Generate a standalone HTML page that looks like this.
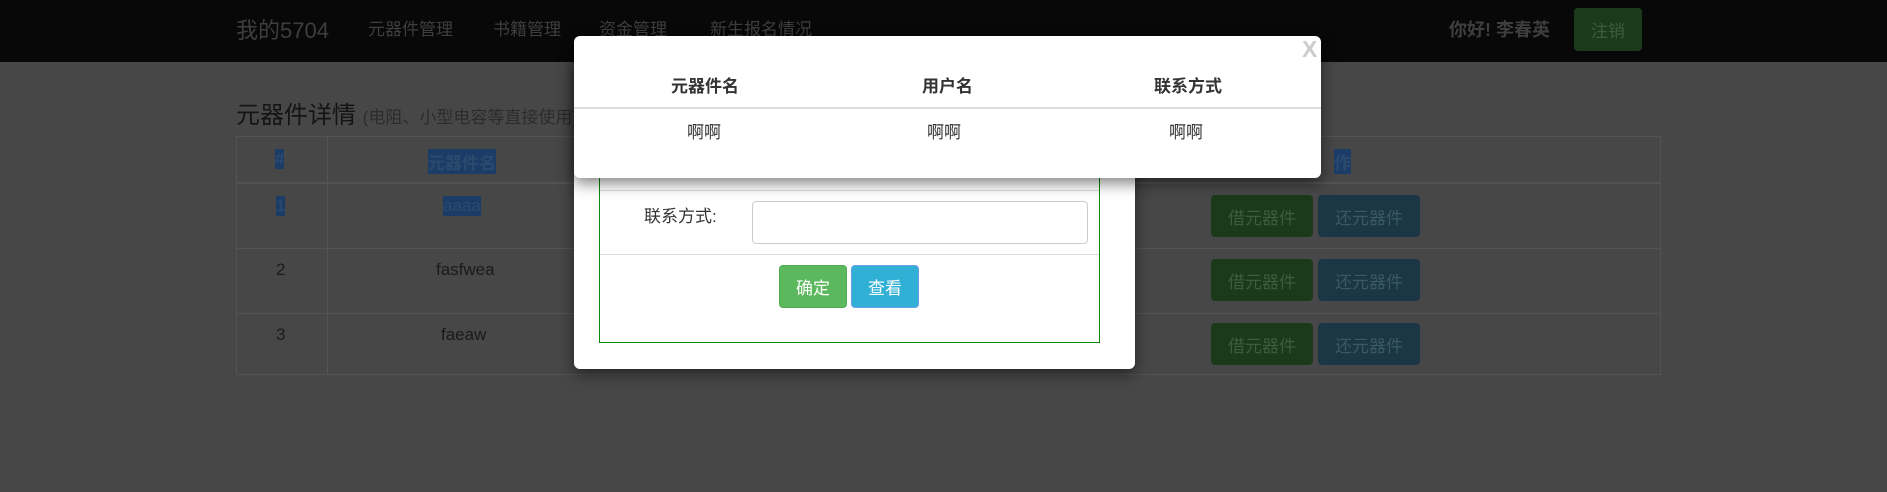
<!DOCTYPE html>
<html><head><meta charset="utf-8"><style>
*{box-sizing:border-box;margin:0;padding:0}
body{width:1887px;height:492px;background:#474747;font-family:"Liberation Sans","Noto Sans CJK SC",sans-serif;position:relative;overflow:hidden;color:#1a1a1a}
.a{position:absolute;white-space:nowrap}
.nav{position:absolute;left:0;top:0;width:1887px;height:62px;background:#080808}
.btn{position:absolute;border-radius:4px;display:flex;align-items:center;justify-content:center;font-size:17px}
.modal{position:absolute;background:#fff;border-radius:6px;box-shadow:0 5px 15px rgba(0,0,0,.5)}
</style></head><body>
<div class="nav"></div>
<div class="a" style="left:236px;top:13px;font-size:22px;color:#3e3e3e">我的5704</div>
<div class="a" style="left:368px;top:15px;font-size:17px;color:#3e3e3e">元器件管理</div>
<div class="a" style="left:493px;top:15px;font-size:17px;color:#3e3e3e">书籍管理</div>
<div class="a" style="left:599px;top:15px;font-size:17px;color:#3e3e3e">资金管理</div>
<div class="a" style="left:710px;top:15px;font-size:17px;color:#3e3e3e">新生报名情况</div>
<div class="a" style="left:1449px;top:16px;font-size:18px;font-weight:bold;color:#3e3e3e">你好! 李春英</div>
<div class="btn" style="left:1574px;top:8px;width:68px;height:43px;background:#1b3a1b;color:#3c5c3c">注销</div>

<div class="a" style="left:236px;top:95px;font-size:24px;color:#141414">元器件详情 <span style="font-size:17px;color:#2c2c2c">(电阻、小型电容等直接使用)</span></div>

<div class="a" style="left:236px;top:136px;width:1425px;height:239px;border:1px solid #535353"></div>
<div class="a" style="left:236px;top:182px;width:1425px;height:2px;background:#535353"></div>
<div class="a" style="left:236px;top:248px;width:1425px;height:1px;background:#535353"></div>
<div class="a" style="left:236px;top:313px;width:1425px;height:1px;background:#535353"></div>
<div class="a" style="left:327px;top:136px;width:1px;height:239px;background:#535353"></div>
<div class="a" style="left:275px;top:149px;font-size:17px;font-weight:bold;background:#1a3c66;color:#2c4a6e">#</div>
<div class="a" style="left:428px;top:149px;font-size:17px;font-weight:bold;background:#1a3c66;color:#2c4a6e">元器件名</div>
<div class="a" style="left:1334px;top:149px;font-size:17px;font-weight:bold;background:#1a3c66;color:#2c4a6e">作</div>
<div class="a" style="left:276px;top:196px;font-size:17px;background:#1a3c66;color:#2c4a6e">1</div>
<div class="a" style="left:443px;top:196px;font-size:17px;background:#1a3c66;color:#2c4a6e">aaaa</div>
<div class="a" style="left:276px;top:260px;font-size:17px;color:#1a1a1a">2</div>
<div class="a" style="left:436px;top:260px;font-size:17px;color:#1a1a1a">fasfwea</div>
<div class="a" style="left:276px;top:325px;font-size:17px;color:#1a1a1a">3</div>
<div class="a" style="left:441px;top:325px;font-size:17px;color:#1a1a1a">faeaw</div>
<div class="btn" style="left:1211px;top:195px;width:102px;height:42px;background:#1b3a1b;color:#3c5c3c">借元器件</div>
<div class="btn" style="left:1318px;top:195px;width:102px;height:42px;background:#1b3645;color:#3a5866">还元器件</div>
<div class="btn" style="left:1211px;top:259px;width:102px;height:42px;background:#1b3a1b;color:#3c5c3c">借元器件</div>
<div class="btn" style="left:1318px;top:259px;width:102px;height:42px;background:#1b3645;color:#3a5866">还元器件</div>
<div class="btn" style="left:1211px;top:323px;width:102px;height:42px;background:#1b3a1b;color:#3c5c3c">借元器件</div>
<div class="btn" style="left:1318px;top:323px;width:102px;height:42px;background:#1b3645;color:#3a5866">还元器件</div>

<div class="modal" style="left:574px;top:60px;width:561px;height:309px">
  <div class="a" style="left:25px;top:0;width:501px;height:283px;border:1px solid #0a8a0a;border-top:none"></div>
  <div class="a" style="left:26px;top:130px;width:499px;height:1px;background:#ddd"></div>
  <div class="a" style="left:70px;top:142px;font-size:17px;color:#333">联系方式:</div>
  <div class="a" style="left:178px;top:141px;width:336px;height:43px;border:1px solid #ccc;border-radius:4px"></div>
  <div class="a" style="left:26px;top:194px;width:499px;height:1px;background:#ddd"></div>
  <div class="btn" style="left:205px;top:205px;width:68px;height:43px;background:#5cb85c;color:#fff;border:1px solid #4cae4c">确定</div>
  <div class="btn" style="left:277px;top:205px;width:68px;height:43px;background:#31b0d5;color:#fff;border:1px solid #6aa0e8">查看</div>
</div>

<div class="modal" style="left:574px;top:36px;width:747px;height:142px">
  <div class="a" style="left:728px;top:0px;font-size:23px;font-weight:bold;color:#ccc">X</div>
  <div class="a" style="left:97px;top:36px;font-size:17px;font-weight:bold;color:#333">元器件名</div>
  <div class="a" style="left:348px;top:36px;font-size:17px;font-weight:bold;color:#333">用户名</div>
  <div class="a" style="left:580px;top:36px;font-size:17px;font-weight:bold;color:#333">联系方式</div>
  <div class="a" style="left:0;top:71px;width:747px;height:2px;background:#ddd"></div>
  <div class="a" style="left:113px;top:82px;font-size:17px;color:#333">啊啊</div>
  <div class="a" style="left:353px;top:82px;font-size:17px;color:#333">啊啊</div>
  <div class="a" style="left:595px;top:82px;font-size:17px;color:#333">啊啊</div>
</div>
</body></html>
